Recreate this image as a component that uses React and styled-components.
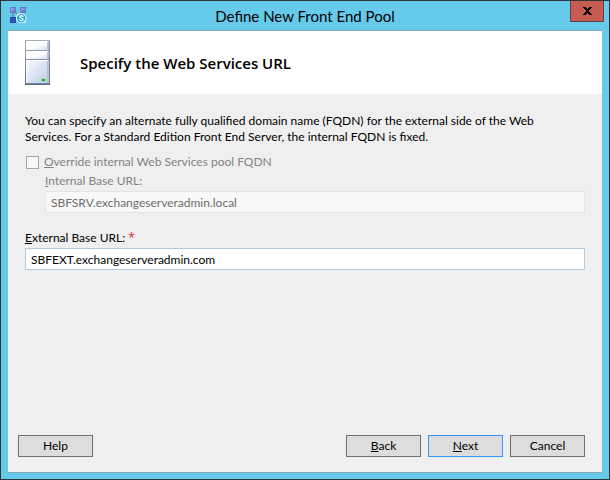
import React from 'react';
import styled, { createGlobalStyle } from 'styled-components';

const GlobalStyle = createGlobalStyle`
    * {
        box-sizing: border-box;
    }

    body {
        margin: 0;
        font-family: Lato, 'Open Sans', sans-serif;
        font-size: 12px;
        line-height: 16px;
        color: #000;
    }
`;

const Window = styled.div`
    display: flex;
    flex-direction: column;
    min-height: 100vh;
    background: #66caea;
    border: 1px solid #30343b;
`;

const TitleBar = styled.header`
    display: grid;
    grid-template-columns: 48px 1fr 52px;
    align-items: center;
    height: 29px;
    padding: 0 5px 0 9px;
`;

const Title = styled.h1`
    margin: 0;
    font-size: 15px;
    font-weight: 400;
    line-height: 20px;
    text-align: center;
    white-space: nowrap;
`;

const CloseButton = styled.button`
    display: flex;
    align-items: center;
    justify-content: center;
    align-self: start;
    justify-self: end;
    width: 34px;
    height: 21px;
    padding: 0;
    background: #c75b52;
    border: 1px solid #643f42;
    border-top: 0;
`;

const Client = styled.main`
    display: flex;
    flex: 1;
    flex-direction: column;
    margin: 0 7px 6px;
    background: #efefef;
    border-top: 1px solid #81a9b8;
    border-bottom: 1px solid #81a9b8;
`;

const Banner = styled.div`
    display: flex;
    align-items: center;
    gap: 30px;
    height: 63px;
    padding: 0 17px;
    background: #fff;
`;

const Heading = styled.h2`
    margin: 0;
    font-family: 'Open Sans', sans-serif;
    font-size: 15px;
    font-weight: 600;
    line-height: 24px;
`;

const Form = styled.form`
    display: flex;
    flex: 1;
    flex-direction: column;
`;

const Fields = styled.div`
    flex: 1;
    padding: 19px 17px 0;
`;

const Intro = styled.p`
    margin: 0 0 9px;
    padding-right: 20px;
`;

const CheckRow = styled.label`
    display: flex;
    align-items: center;
    gap: 5px;
    padding-left: 1px;
    color: #838383;
`;

const CheckBox = styled.input`
    appearance: none;
    width: 13px;
    height: 13px;
    margin: 0;
    background: #f7f7f7;
    border: 1px solid #a5a5a5;
`;

const Field = styled.div`
    display: flex;
    flex-direction: column;
    gap: 2px;
    margin-top: ${(props) => (props.$nested ? '3px' : '17px')};
    padding-left: ${(props) => (props.$nested ? '20px' : '0')};
`;

const FieldLabel = styled.label`
    color: ${(props) => (props.$muted ? '#838383' : '#000')};
`;

const Required = styled.span`
    font-family: 'Open Sans', sans-serif;
    color: #d8262c;
`;

const TextBox = styled.input`
    width: 100%;
    height: 22px;
    padding: 0 5px;
    font: inherit;
    color: #000;
    background: #fff;
    border: 1px solid #b1cbe3;
    outline: none;

    &:disabled {
        color: #6d6d6d;
        background: #f8f8f8;
        border-color: #e3e4e9;
    }
`;

const Footer = styled.footer`
    display: flex;
    gap: 7px;
    padding: 0 17px 15px 10px;
`;

const Button = styled.button`
    width: 75px;
    height: 22px;
    margin-right: ${(props) => (props.$start ? 'auto' : '0')};
    padding: 0;
    font: inherit;
    color: #000;
    background: #dddddd;
    border: 1px solid ${(props) => (props.$primary ? '#3399ff' : '#707070')};
`;

const TopologyIcon = () => (
    <svg width="17" height="17" viewBox="0 0 17 17" aria-hidden="true">
        <defs>
            <linearGradient id="node" x1="0" y1="0" x2="1" y2="1">
                <stop offset="0" stopColor="#a9b9ee" />
                <stop offset="1" stopColor="#4f66c0" />
            </linearGradient>
        </defs>
        <path d="M3 5v7M5 5l4 4M13 5l-4 4" stroke="#7a8495" strokeWidth="1.5" fill="none" />
        <rect x="0.5" y="0.5" width="5" height="5" fill="url(#node)" stroke="#6579c4" />
        <rect x="10.5" y="0.5" width="5" height="5" fill="url(#node)" stroke="#6579c4" />
        <rect x="0.5" y="10.5" width="5" height="5" fill="#2f55b5" stroke="#2849a0" />
        <circle cx="9.5" cy="9.5" r="3" fill="#fff" />
        <circle cx="13" cy="13" r="3" fill="#fff" />
        <circle cx="11.3" cy="11.3" r="5" fill="#fff" />
        <circle cx="11.3" cy="11.3" r="4.2" fill="#16a9df" />
        <path
            d="M13 9.4c-.6-.9-3.2-1-3.2.4 0 1.5 3.3.9 3.3 2.6 0 1.5-2.8 1.5-3.5.3"
            stroke="#fff"
            strokeWidth="1.3"
            strokeLinecap="round"
            fill="none"
        />
    </svg>
);

const ServerIcon = () => (
    <svg width="25" height="45" viewBox="0 0 25 45" aria-hidden="true">
        <defs>
            <linearGradient id="face" x1="0" y1="0" x2="1" y2="1">
                <stop offset="0" stopColor="#fafbff" />
                <stop offset="1" stopColor="#bccaeb" />
            </linearGradient>
            <linearGradient id="shell" x1="0" y1="0" x2="0" y2="1">
                <stop offset="0" stopColor="#a6afb9" />
                <stop offset="1" stopColor="#596a81" />
            </linearGradient>
            <linearGradient id="bay" x1="0" y1="0" x2="1" y2="1">
                <stop offset="0.5" stopColor="#fff" />
                <stop offset="1" stopColor="#d0d9ef" />
            </linearGradient>
        </defs>
        <rect width="25" height="45" fill="url(#shell)" />
        <rect x="1" y="1" width="23" height="9" fill="url(#bay)" />
        <rect x="1" y="11" width="23" height="8" fill="url(#bay)" />
        <rect x="1" y="20" width="23" height="24" fill="#fff" />
        <rect x="2" y="21" width="21" height="22" fill="url(#face)" />
        <path d="M22.5 2v7M22.5 12v6M22.5 21v22" stroke="#b4c0d4" />
        <path d="M24 1v43M1 43.5h23" stroke="#77879e" />
        <rect x="16" y="38" width="5" height="4" fill="#a4dfaf" />
        <rect x="17" y="39" width="3" height="2" fill="#08bd10" />
    </svg>
);

const CloseIcon = () => (
    <svg width="9" height="8" viewBox="0 0 9 8" aria-hidden="true" shapeRendering="crispEdges">
        <path
            d="M0 0h3v1h1v1h1V1h1V0h3v1H8v1H7v1H6v2h1v1h1v1h1v1H6V7H5V6H4v1H3v1H0V7h1V6h1V5h1V3H2V2H1V1H0z"
            fill="#000"
        />
    </svg>
);

const App = () => (
    <React.Fragment>
        <GlobalStyle />
        <Window>
            <TitleBar>
                <TopologyIcon />
                <Title>Define New Front End Pool</Title>
                <CloseButton type="button" aria-label="Close">
                    <CloseIcon />
                </CloseButton>
            </TitleBar>
            <Client>
                <Banner>
                    <ServerIcon />
                    <Heading>Specify the Web Services URL</Heading>
                </Banner>
                <Form onSubmit={(e) => e.preventDefault()}>
                    <Fields>
                        <Intro>
                            You can specify an alternate fully qualified domain name (FQDN) for the external side of the
                            Web Services. For a Standard Edition Front End Server, the internal FQDN is fixed.
                        </Intro>
                        <CheckRow>
                            <CheckBox type="checkbox" disabled />
                            <span>
                                <u>O</u>verride internal Web Services pool FQDN
                            </span>
                        </CheckRow>
                        <Field $nested>
                            <FieldLabel htmlFor="internal-url" $muted>
                                <u>I</u>nternal Base URL:
                            </FieldLabel>
                            <TextBox id="internal-url" defaultValue="SBFSRV.exchangeserveradmin.local" disabled />
                        </Field>
                        <Field>
                            <FieldLabel htmlFor="external-url">
                                <u>E</u>xternal Base URL: <Required>*</Required>
                            </FieldLabel>
                            <TextBox id="external-url" defaultValue="SBFEXT.exchangeserveradmin.com" required />
                        </Field>
                    </Fields>
                    <Footer>
                        <Button type="button" $start>
                            Help
                        </Button>
                        <Button type="button">
                            <u>B</u>ack
                        </Button>
                        <Button type="submit" $primary>
                            <u>N</u>ext
                        </Button>
                        <Button type="button">Cancel</Button>
                    </Footer>
                </Form>
            </Client>
        </Window>
    </React.Fragment>
);

export default App;
